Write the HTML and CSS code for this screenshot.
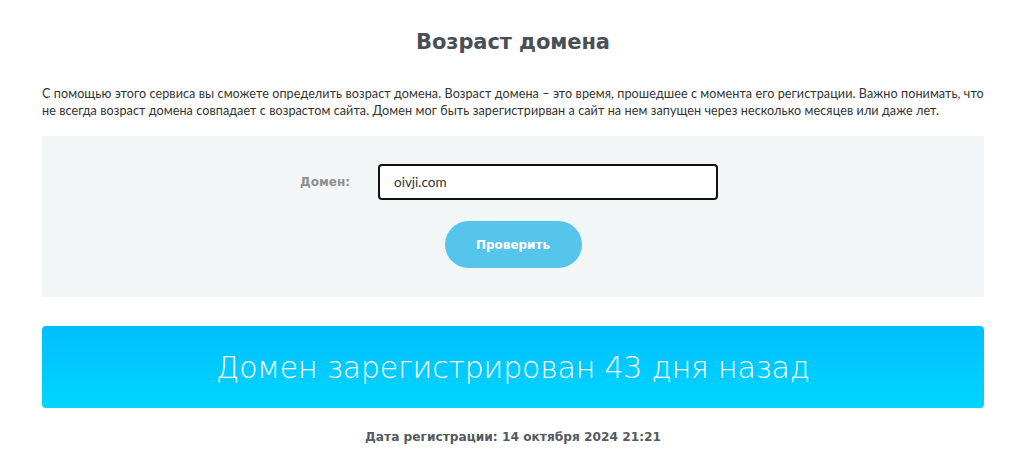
FILE: index.html
```html
<!DOCTYPE html>
<html lang="ru">
<head>
<meta charset="utf-8">
<title>Возраст домена</title>
<link rel="stylesheet" href="styles.css">
</head>
<body>
<main class="page">
  <h1 class="title">Возраст домена</h1>
  <p class="intro">С помощью этого сервиса вы сможете определить возраст домена. Возраст домена – это время, прошедшее с момента его регистрации. Важно понимать, что не всегда возраст домена совпадает с возрастом сайта. Домен мог быть зарегистрирван а сайт на нем запущен через несколько месяцев или даже лет.</p>
  <form class="checker">
    <div class="row">
      <label class="label" for="domain">Домен:</label>
      <input class="field" id="domain" type="text" value="oivji.com">
    </div>
    <button class="btn" type="button">Проверить</button>
  </form>
  <div class="result">Домен зарегистрирован 43 дня назад</div>
  <p class="date">Дата регистрации: 14 октября 2024 21:21</p>
</main>
</body>
</html>
```

FILE: styles.css
```css
* { box-sizing: border-box; }
html, body { margin: 0; padding: 0; background: #fff; }
body { font-family: "DejaVu Sans", "Open Sans", sans-serif; color: #4a4f55; padding-left: 3px; }
.page { width: 942px; margin: 0 auto; padding-top: 27px; }
.title {
  margin: 0;
  text-align: center;
  font-size: 21px;
  font-weight: bold;
  color: #4a4f57;
  line-height: 30px;
  letter-spacing: -0.1px;
}
.intro {
  margin: 28px 0 0;
  font-family: "Lato", "Open Sans", sans-serif;
  font-size: 12.6px;
  line-height: 17px;
  color: #333;
  letter-spacing: 0.08px;
}
.checker {
  margin-top: 17px;
  background: #f3f6f7;
  height: 161px;
  padding-top: 28px;
  display: flex;
  flex-direction: column;
  align-items: center;
}
.row { display: flex; align-items: center; margin-left: -8px; }
.label {
  width: 78px;
  font-size: 12px;
  font-weight: bold;
  color: #8e8e8e;
}
.field {
  width: 340px;
  height: 36px;
  border: 2px solid #111;
  border-radius: 4px;
  padding: 0 14px;
  font-family: "Lato", "Open Sans", sans-serif;
  font-size: 13.5px;
  color: #333;
  background: #fff;
  outline: none;
}
.btn {
  margin-top: 21px;
  margin-left: 0;
  width: 137px;
  height: 47px;
  border: 0;
  border-radius: 24px;
  background: #56c5ec;
  color: #fff;
  font-family: "DejaVu Sans", sans-serif;
  font-size: 12px;
  font-weight: bold;
}
.result {
  margin-top: 29px;
  height: 82px;
  border-radius: 4px;
  background: linear-gradient(to bottom, #00bfff, #00d5ff);
  color: #fff;
  display: flex;
  align-items: center;
  justify-content: center;
  font-family: "DejaVu Sans", sans-serif;
  font-weight: 300;
  font-size: 30px;
  letter-spacing: -0.2px;
}
.date {
  margin: 22px 0 0;
  text-align: center;
  font-size: 12.2px;
  font-weight: bold;
  color: #555a60;
}
```
